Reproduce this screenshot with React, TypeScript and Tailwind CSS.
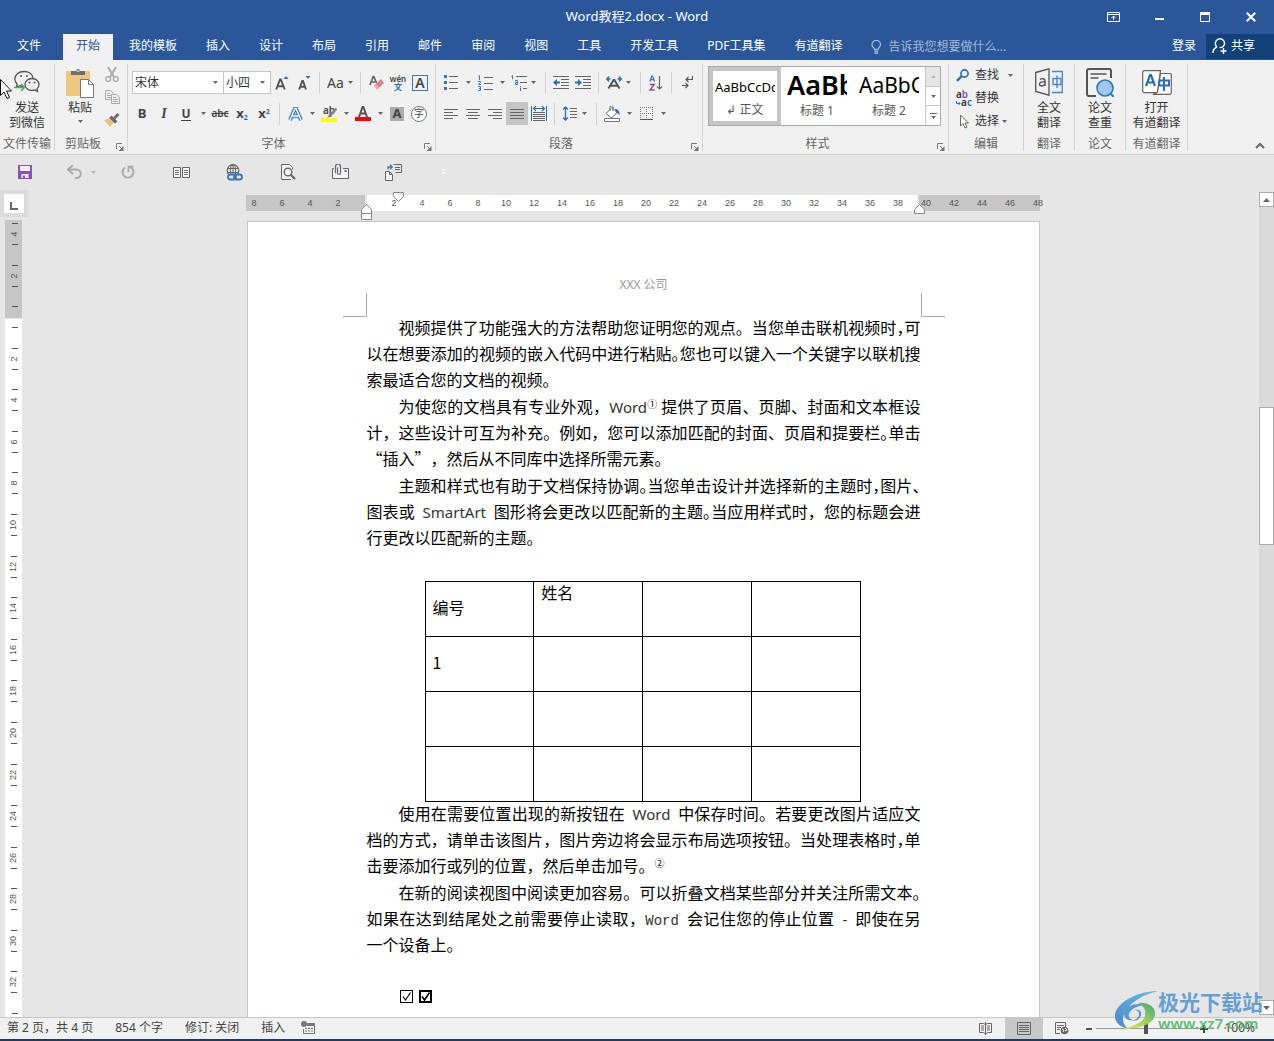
import type { ReactNode } from "react";

const UI_FONT = "font-['Noto_Sans','Noto_Sans_CJK_SC',sans-serif]";

const TABS = ["插入", "设计", "布局", "引用", "邮件", "审阅", "视图", "工具", "开发工具", "PDF工具集", "有道翻译"];

const H_MARKS = [8, 6, 4, 2, 0, 2, 4, 6, 8, 10, 12, 14, 16, 18, 20, 22, 24, 26, 28, 30, 32, 34, 36, 38, 40, 42, 44, 46, 48];
// 0 draws the ticks only
const V_MARKS = [4, 2, 0, 2, 4, 6, 8, 10, 12, 14, 16, 18, 20, 22, 24, 26, 28, 30, 32, 0];

interface IconProps {
  w: number;
  h: number;
  children: ReactNode;
  className?: string;
}

function Icon({ w, h, children, className = "" }: IconProps) {
  return (
    <svg width={w} height={h} viewBox={`0 0 ${w} ${h}`} fill="none" className={`shrink-0 ${className}`} aria-hidden="true">
      {children}
    </svg>
  );
}

function Caret() {
  return (
    <Icon w={5} h={3}>
      <path d="M0 0h5L2.500 3z" fill="#666" />
    </Icon>
  );
}

function Tool({ label, active, children }: { label: string; active?: boolean; children: ReactNode }) {
  return (
    <button aria-label={label} className={`flex h-[23px] w-[22px] shrink-0 items-center justify-center ${active ? "bg-[#c5c5c5]" : ""}`}>
      {children}
    </button>
  );
}

function Drop({ label, tight }: { label: string; tight?: boolean }) {
  return (
    <button aria-label={label} className={`flex h-[23px] shrink-0 items-center ${tight ? "w-[11px] pl-px" : "w-3 justify-center"}`}>
      <Caret />
    </button>
  );
}

function Sep() {
  return (
    <span className="flex w-[9px] shrink-0 justify-center">
      <span className="h-[22px] w-px bg-[#d4d4d4]" />
    </span>
  );
}

interface GroupProps {
  title: string;
  width: string;
  launcher?: boolean;
  children: ReactNode;
}

function Group({ title, width, launcher, children }: GroupProps) {
  return (
    <section className={`flex shrink-0 flex-col border-r border-[#d4d4d4] ${width}`}>
      <div className="h-[73px]">{children}</div>
      <div className={`relative text-center leading-[14px] whitespace-nowrap text-[#666] ${launcher ? "pr-4" : ""}`}>
        {title}
        {launcher && (
          <button aria-label={`${title}设置`} className="absolute right-[3px] bottom-0">
            <Icon w={8} h={8}>
              <path d="M.5 6V.5H6M3 3l3 3" stroke="#777" />
              <path d="M7.500 3v5h-5z" fill="#777" />
            </Icon>
          </button>
        )}
      </div>
    </section>
  );
}

function BigButton({ icon, lines }: { icon: ReactNode; lines: string[] }) {
  return (
    <button className="flex w-full flex-col items-center pt-[3px] leading-[15px] whitespace-nowrap text-[#333]">
      <span className="mb-[3px] flex h-[30px] items-center">{icon}</span>
      {lines.map((l) => (
        <span key={l}>{l}</span>
      ))}
    </button>
  );
}

/* ---------- title bar and tabs ---------- */

function TitleBar() {
  return (
    <div className="relative flex h-[34px] items-center justify-end text-white">
      <h1 className="absolute inset-x-0 text-center text-[13px]">Word教程2.docx - Word</h1>
      <div className="relative flex">
        <button aria-label="功能区显示选项" className="flex h-8 w-[46px] items-center justify-center">
          <Icon w={13} h={10}>
            <path d="M.5.5h12v9H.5zM.5 2.500h12M6.500 8V4.500M4.500 6l2-2 2 2" stroke="#fff" />
          </Icon>
        </button>
        <button aria-label="最小化" className="flex h-8 w-[46px] items-center justify-center">
          <span className="mt-1 h-0.5 w-[9px] bg-white" />
        </button>
        <button aria-label="最大化" className="flex h-8 w-[46px] items-center justify-center">
          <span className="h-[10px] w-[10px] border border-t-[3px] border-white" />
        </button>
        <button aria-label="关闭" className="flex h-8 w-[46px] items-center justify-center">
          <Icon w={10} h={10}>
            <path d="M.8.8l8.400 8.400M9.200.8L.8 9.200" stroke="#fff" strokeWidth="2" />
          </Icon>
        </button>
      </div>
    </div>
  );
}

function TabBar() {
  return (
    <nav className="flex h-[26px] items-stretch text-white">
      <div className="flex items-stretch gap-[29px] pl-[17px] whitespace-nowrap">
        <button className="mr-1.5 pb-[3px]">文件</button>
        <button className="-mx-[13px] bg-[#f1f1f1] px-[13px] pb-[3px] text-[#2b579a]">开始</button>
        <button className="pb-[3px]">我的模板</button>
        {TABS.map((t) => (
          <button key={t} className="pb-[3px]">
            {t}
          </button>
        ))}
      </div>
      <label className="ml-[29px] flex items-center gap-1.5 text-[#a3b8d8]">
        <Icon w={11} h={14}>
          <path d="M3.500 9.500C3.500 8 1 7 1 4.600a4.200 4.200 0 018.500 0C9.500 7 7 8 7 9.500zM3.500 11.500h3.600M3.500 13.300h3.600" stroke="#a3b8d8" strokeWidth="1.300" />
        </Icon>
        <input
          placeholder="告诉我您想要做什么..."
          className="w-[140px] bg-transparent outline-none placeholder:text-[#a3b8d8]"
        />
      </label>
      <button className="ml-auto pr-[10px] pb-[3px]">登录</button>
      <button className="mb-px flex w-[68px] items-center gap-1 bg-[#124078] pb-0.5 pl-1.5">
        <Icon w={15} h={16}>
          <path d="M1 15c0-4 2.500-5.500 4-6M12.500 6A4.600 4.600 0 105 9M7.500 9.600c2.600 0 5-1 5-4.600M11.500 10v6M8.500 13h6" stroke="#fff" strokeWidth="1.400" />
        </Icon>
        共享
      </button>
    </nav>
  );
}

/* ---------- ribbon ---------- */

function ClipboardGroup() {
  return (
    <Group title="剪贴板" width="w-[73px]" launcher>
      <div className="flex pl-px">
        <button className="flex w-12 flex-col items-center pt-1 leading-[15px] text-[#333]">
          <Icon w={28} h={30}>
            <path d="M0 3h24v25H0z" fill="#edc87e" />
            <path d="M5 7V3h5a2 2 0 014 0h5v4z" fill="#6e6e6e" />
            <path d="M10.500 3h3" stroke="#fff" />
            <path d="M14.500 11.500h8l5 5v13h-13z" fill="#fff" stroke="#777" />
            <path d="M22.500 11.500v5h5" stroke="#777" />
          </Icon>
          <span className="mt-0.5 mb-[5px]">粘贴</span>
          <Caret />
        </button>
        <div className="flex flex-col gap-[3px]">
          <button aria-label="剪切" className="flex h-5 w-4 items-center justify-center">
            <Icon w={14} h={15}>
              <path d="M3 0l6 10M11 0L5 10" stroke="#aaa" strokeWidth="2" />
              <circle cx="3.200" cy="12" r="2.400" stroke="#aaa" strokeWidth="1.400" />
              <circle cx="10.800" cy="12" r="2.400" stroke="#aaa" strokeWidth="1.400" />
            </Icon>
          </button>
          <button aria-label="复制" className="flex h-5 w-4 items-center justify-center">
            <Icon w={15} h={14}>
              <path d="M.5.500h5l3 3v6h-8zM2 3.500h3M2 5.500h4M2 7.500h4" stroke="#aca7ac" />
              <path d="M6.500 4.500h5l3 3v6h-8z" fill="#f1f1f1" stroke="#aca7ac" />
              <path d="M8 7.500h3M8 9.500h5M8 11.500h5" stroke="#aca7ac" />
            </Icon>
          </button>
          <button aria-label="格式刷" className="flex h-5 w-4 items-center justify-center">
            <Icon w={16} h={14}>
              <path d="M0 7l5-1.500 5 4L6 14z" fill="#edc07a" />
              <path d="M5 5l2.500-2.500 6 6L11 10.500z" fill="#6e6e6e" />
              <path d="M10 5.500L14.500 1" stroke="#6e6e6e" strokeWidth="3" />
            </Icon>
          </button>
        </div>
      </div>
    </Group>
  );
}

function FontSelect({ label, value, width }: { label: string; value: string; width: string }) {
  return (
    <label className={`relative flex h-[23px] shrink-0 items-center ${width}`}>
      <select aria-label={label} defaultValue={value} className="h-full w-full appearance-none rounded-none border border-[#c6c6c6] bg-white pl-0.5 text-[#333]">
        <option>{value}</option>
      </select>
      <span className="pointer-events-none absolute right-1.5">
        <Caret />
      </span>
    </label>
  );
}

function FontGroup() {
  return (
    <Group title="字体" width="w-[308px]" launcher>
      <div className="flex items-center pt-[7px] pl-1">
        <FontSelect label="字体" value="宋体" width="w-[92px]" />
        <FontSelect label="字号" value="小四" width="-ml-px w-12" />
        <Tool label="增大字号">
          <Icon w={14} h={14}>
            <path d="M1.200 13.500L5 3.500h.8l3.900 10M2.600 10.300h5.600" stroke="#555" strokeWidth="1.900" />
            <path d="M8.500 3L11 0l2.500 3z" fill="#3c74b4" />
          </Icon>
        </Tool>
        <Tool label="减小字号">
          <Icon w={14} h={14}>
            <path d="M2.200 13.500L5.200 5h.8l3 8.500M3.400 10.800h4.400" stroke="#555" strokeWidth="1.900" />
            <path d="M8.500 0h5L11 3z" fill="#3c74b4" />
          </Icon>
        </Tool>
        <Sep />
        <button aria-label="更改大小写" className="flex w-8 items-center justify-center gap-1 text-[14px] leading-5 text-[#444]">
          Aa <Caret />
        </button>
        <Sep />
        <Tool label="清除格式">
          <Icon w={15} h={15}>
            <path d="M1 10L4.200 1.500h.6L7.500 8M2 7h4" stroke="#666" strokeWidth="1.700" />
            <path d="M5 10.500l7-6.500 3 4-7 6.500z" fill="#e8798f" />
            <path d="M5 10.500l2-1.800 3 4-2 1.800z" fill="#f0a7b4" />
          </Icon>
        </Tool>
        <Tool label="拼音指南">
          <span className="flex flex-col items-center text-[8px] leading-[9px] text-[#444]">
            <span className="font-semibold">wén</span>
            <b className="leading-[8px] text-[#2e6cb0]">文</b>
          </span>
        </Tool>
        <Tool label="字符边框">
          <span className="flex h-4 w-4 items-center justify-center border border-[#3c74b4] text-[14px] font-semibold text-[#444]">A</span>
        </Tool>
      </div>
      <div className="flex items-center pt-2 pl-[3px] text-[13px] text-[#444]">
        <Tool label="加粗">
          <b>B</b>
        </Tool>
        <Tool label="倾斜">
          <b className="font-['Liberation_Serif',serif] text-[14px] italic">I</b>
        </Tool>
        <Tool label="下划线">
          <b className="border-b border-[#444] text-[12px] leading-[13px]">U</b>
        </Tool>
        <Drop label="下划线样式" />
        <Tool label="删除线">
          <span className="text-[10px] font-semibold line-through">abc</span>
        </Tool>
        <Tool label="下标">
          <b>
            x<sub className="text-[7px] text-[#2e6cb0]">2</sub>
          </b>
        </Tool>
        <Tool label="上标">
          <b>
            x<sup className="text-[7px] text-[#2e6cb0]">2</sup>
          </b>
        </Tool>
        <Sep />
        <Tool label="文本效果">
          <Icon w={15} h={14}>
            <path d="M2 13L7 1.500h1L13 13M4.500 9h6" stroke="#a9cbee" strokeWidth="4.600" />
            <path d="M2 13L7 1.500h1L13 13M4.500 9h6" stroke="#2e6cb0" strokeWidth="3.200" />
            <path d="M2 13L7 1.500h1L13 13M4.500 9h6" stroke="#fff" strokeWidth="1.400" />
          </Icon>
        </Tool>
        <Drop label="文本效果选项" />
        <Tool label="突出显示">
          <span className="relative flex h-4 w-4 flex-col justify-between">
            <span className="text-[10px] leading-[9px] font-semibold">ab</span>
            <span className="h-1 bg-[#ffff00]" />
            <Icon w={12} h={11} className="absolute top-0.5 left-1">
              <path d="M11.500.5L5 7.500" stroke="#888" strokeWidth="2.600" />
              <path d="M5.500 5L2 9.500l5-1z" fill="#777" />
            </Icon>
          </span>
        </Tool>
        <Drop label="突出显示颜色" />
        <Tool label="字体颜色">
          <Icon w={16} h={15}>
            <path d="M0 11h16v4H0z" fill="#f00" />
            <path d="M4 11L7.600 1h.8L12 11M5.500 7.500h5" stroke="#555" strokeWidth="2" />
          </Icon>
        </Tool>
        <Drop label="字体颜色选项" />
        <Tool label="字符底纹">
          <b className="flex h-[14px] w-[14px] items-center justify-center bg-[#ababab]">A</b>
        </Tool>
        <Tool label="带圈字符">
          <span className="flex h-4 w-4 shrink-0 items-center justify-center rounded-full border border-[#777] bg-white text-[10px]">字</span>
        </Tool>
      </div>
    </Group>
  );
}

const ALIGN_LINES = [
  { label: "左对齐", d: "M0 .5h14M0 3.500h9M0 6.500h14M0 9.500h9" },
  { label: "居中", d: "M0 .5h14M2 3.500h10M0 6.500h14M2 9.500h10" },
  { label: "右对齐", d: "M0 .5h14M5 3.500h9M0 6.500h14M5 9.500h9" },
  { label: "两端对齐", d: "M0 .5h14M0 3.500h14M0 6.500h14M0 9.500h14" },
];

function ParagraphGroup() {
  return (
    <Group title="段落" width="w-[267px]" launcher>
      <div className="flex items-center pt-[7px] pl-1">
        <Tool label="项目符号">
          <Icon w={14} h={15}>
            <path d="M5 1.500h9M5 7.500h9M5 13.500h9" stroke="#666" />
            <path d="M0 0h3v3H0zM0 6h3v3H0zM0 12h3v3H0z" fill="#3c74b4" />
          </Icon>
        </Tool>
        <Drop label="项目符号库" />
        <Tool label="编号">
          <Icon w={15} h={16}>
            <path d="M6 2.500h9M6 8.500h9M6 14.500h9" stroke="#666" />
            <path d="M.5 1.500l1-1V5M0 6.500h2.500v1L.5 9.500H3M0 11.500h2.500v4H0M1 13.500h1.500" stroke="#3c74b4" />
          </Icon>
        </Tool>
        <Drop label="编号库" />
        <Tool label="多级列表">
          <Icon w={16} h={16}>
            <path d="M5 1.500h11M9 7.500h7M12 13.500h4" stroke="#666" />
            <path d="M.5 1.500l1-1V4M4 5.500h2.500v4H4.500v-2h2M9.500 11v.8M9.500 12.500V16" stroke="#3c74b4" />
          </Icon>
        </Tool>
        <Drop label="列表库" tight />
        <Sep />
        <Tool label="减少缩进量">
          <Icon w={16} h={13}>
            <path d="M0 .5h16M8 3.500h8M8 6.500h8M8 9.500h8M0 12.500h16" stroke="#666" />
            <path d="M7 6.500H2" stroke="#2e6cb0" strokeWidth="2" />
            <path d="M4 3v7L0 6.500z" fill="#2e6cb0" />
          </Icon>
        </Tool>
        <Tool label="增加缩进量">
          <Icon w={16} h={13}>
            <path d="M0 .5h16M8 3.500h8M8 6.500h8M8 9.500h8M0 12.500h16" stroke="#666" />
            <path d="M0 6.500h5" stroke="#2e6cb0" strokeWidth="2" />
            <path d="M3 3v7l4-3.500z" fill="#2e6cb0" />
          </Icon>
        </Tool>
        <Sep />
        <Tool label="中文版式">
          <Icon w={16} h={13}>
            <path d="M2.500 12.500L7.600 4h.8l5.100 8.500M4.500 9.800h7" stroke="#555" strokeWidth="2" />
            <path d="M.5 3h4M11.500 3h4M3 .5L.8 3 3 5.500M13 .5L15.200 3 13 5.500" stroke="#2e6cb0" strokeWidth="1.400" />
          </Icon>
        </Tool>
        <Drop label="中文版式选项" tight />
        <Sep />
        <Tool label="排序">
          <Icon w={14} h={16}>
            <path d="M.8 6.500L3 .8h.4l2.200 5.700M1.500 4.600h3.500" stroke="#3c74b4" strokeWidth="1.200" />
            <path d="M.8 9.500h4.400L1 15h4.600" stroke="#8a4fae" strokeWidth="1.400" />
            <path d="M10.500 1v13M8 11.500l2.500 2.500 2.500-2.500" stroke="#666" strokeWidth="1.200" />
          </Icon>
        </Tool>
        <Sep />
        <Tool label="显示编辑标记">
          <Icon w={11} h={13}>
            <path d="M10.500 0v3.500H4M6.500 1L4 3.500 6.500 6M0 9.500h5.500M3.500 7L6 9.500 3.500 12" stroke="#555" strokeWidth="1.200" />
          </Icon>
        </Tool>
      </div>
      <div className="flex items-center pt-2 pl-1">
        {ALIGN_LINES.map((a) => (
          <Tool key={a.label} label={a.label} active={a.label === "两端对齐"}>
            <Icon w={14} h={10}>
              <path d={a.d} stroke="#666" />
            </Icon>
          </Tool>
        ))}
        <Tool label="分散对齐">
          <Icon w={16} h={15}>
            <path d="M.5 0v15M15.500 0v15" stroke="#2e6cb0" />
            <path d="M2.500 2.500h11M5 0L2.500 2.500 5 5M11 0l2.500 2.500L11 5" stroke="#2e6cb0" strokeWidth="1.200" />
            <path d="M2 6.500h12M2 8.500h12M2 10.500h12M2 12.500h12M2 14.500h12" stroke="#666" />
          </Icon>
        </Tool>
        <Sep />
        <Tool label="行距">
          <Icon w={14} h={15}>
            <path d="M2.500 1v13M0 3.500L2.500 1 5 3.500M0 11.500L2.500 14 5 11.500" stroke="#2e6cb0" strokeWidth="1.300" />
            <path d="M7 2.500h7M7 5.500h7M7 8.500h7M7 11.500h7" stroke="#666" />
          </Icon>
        </Tool>
        <Drop label="行距选项" tight />
        <Sep />
        <Tool label="底纹">
          <Icon w={17} h={16}>
            <path d="M2 7.500L8 1.500l5 5-5.500 5.500z" fill="#fff" stroke="#666" />
            <path d="M6 5V1.500A1.500 1.500 0 019 1v4" stroke="#666" />
            <path d="M11 3c3 0 5 2 4.500 7-.5-2-1.500-3-3-3z" fill="#2e6cb0" />
            <path d="M.5 12.500h15v3H.5z" fill="#fff" stroke="#777" />
          </Icon>
        </Tool>
        <Drop label="底纹颜色" />
        <Tool label="边框">
          <Icon w={13} h={13}>
            <path d="M.5 0v12M6.500 0v12M12.500 0v12M0 .5h13M0 6.500h13" stroke="#777" strokeDasharray="1 1" />
            <path d="M0 12.500h13" stroke="#555" />
          </Icon>
        </Tool>
        <Drop label="边框选项" />
      </div>
    </Group>
  );
}

function StylesGroup() {
  return (
    <Group title="样式" width="w-[246px]" launcher>
      <div className="pt-0.5 pl-[5px]">
        <div className="flex h-[60px] w-[233px] border border-[#ababab] bg-white text-[#555]">
          <button className="flex w-[72px] flex-col items-center border-4 border-[#c5c5c5]">
            <span className="flex h-8 w-[60px] items-center overflow-hidden pt-px text-[13px] whitespace-nowrap text-black">AaBbCcDc</span>
            <span className="leading-[14px]">↲ 正文</span>
          </button>
          <button className="flex w-[72px] flex-col items-center">
            <span className="flex h-[37px] w-[60px] items-center overflow-hidden text-[27px] font-semibold whitespace-nowrap text-black">AaBb</span>
            <span className="leading-[14px]">标题 1</span>
          </button>
          <button className="flex w-[72px] flex-col items-center">
            <span className="flex h-[37px] w-[60px] items-center overflow-hidden pt-px text-[21px] whitespace-nowrap text-black">AaBbC</span>
            <span className="leading-[14px]">标题 2</span>
          </button>
          <div className="flex flex-1 flex-col divide-y divide-[#c6c6c6] border-l border-[#c6c6c6]">
            <button aria-label="上一行" className="flex flex-1 items-center justify-center bg-[#e6e6e6]">
              <Icon w={5} h={3}>
                <path d="M0 3h5L2.500 0z" fill="#bbb" />
              </Icon>
            </button>
            <button aria-label="下一行" className="flex flex-1 items-center justify-center">
              <Caret />
            </button>
            <button aria-label="其他样式" className="flex flex-1 items-center justify-center">
              <Icon w={7} h={6}>
                <path d="M0 .5h7" stroke="#666" />
                <path d="M1 3h5L3.500 6z" fill="#666" />
              </Icon>
            </button>
          </div>
        </div>
      </div>
    </Group>
  );
}

function EditGroup() {
  return (
    <Group title="编辑" width="w-[75px]">
      <div className="flex flex-col gap-[3px] pt-px pl-[7px] text-[#333]">
        <button className="flex h-5 items-center gap-[3px]">
          <Icon w={16} h={13}>
            <circle cx="8.500" cy="4.500" r="3.600" stroke="#2e6cb0" strokeWidth="1.600" />
            <path d="M5.800 7L1 11.800" stroke="#2e6cb0" strokeWidth="2.400" />
          </Icon>
          查找
          <span className="ml-1.5">
            <Caret />
          </span>
        </button>
        <button className="flex h-5 items-center gap-[3px]">
          <span className="relative flex w-4 flex-col text-[10px] leading-[8px] font-semibold">
            <span className="pr-1 text-left">
              a<span className="text-[#8a4fae]">b</span>
            </span>
            <span className="text-right">
              a<span className="text-[#2e6cb0]">c</span>
            </span>
            <Icon w={5} h={5} className="absolute bottom-0 left-0">
              <path d="M.5 0v2.500H4M2.500 1L4 2.500 2.500 4" stroke="#2e6cb0" />
            </Icon>
          </span>
          替换
        </button>
        <button className="flex h-5 items-center gap-[3px]">
          <Icon w={16} h={15}>
            <path d="M4.500 1v11l2.500-2.500 2 4.500 2-1-2-4h3.500z" fill="#fff" stroke="#666" />
          </Icon>
          选择
          <Caret />
        </button>
      </div>
    </Group>
  );
}

function Ribbon() {
  return (
    <div className="flex h-[95px] shrink-0 border-b border-[#d2d2d2] bg-[#f1f1f1] pt-1 pb-[3px]">
      <Group title="文件传输" width="w-[55px]">
        <BigButton
          lines={["发送", "到微信"]}
          icon={
            <Icon w={26} h={24}>
              <path d="M9.500 16.500c-1.500 0-3-.3-4-.8L2.500 17l.6-3C1.500 12.500.8 11 .8 9 .8 5 4.500 1.500 10 1.500c5 0 8.500 2.800 9 6.500" stroke="#555" strokeWidth="1.300" />
              <path d="M18 8.500c4 0 7 2.700 7 6 0 1.800-.8 3.300-2 4.300l.5 2.600-2.500-1.500c-1 .3-2 .5-3 .5-4 0-7-2.600-7-5.900s3-6 7-6z" fill="#f1f1f1" stroke="#555" strokeWidth="1.300" />
              <circle cx="7" cy="6" r="1" fill="#555" />
              <circle cx="13" cy="6" r="1" fill="#555" />
              <circle cx="15.500" cy="12.500" r="1" fill="#555" />
              <circle cx="20.500" cy="12.500" r="1" fill="#555" />
              <path d="M0 17.500h10M7 14l3.500 3.500L7 21" stroke="#4ba866" strokeWidth="1.500" />
            </Icon>
          }
        />
      </Group>
      <ClipboardGroup />
      <FontGroup />
      <ParagraphGroup />
      <StylesGroup />
      <EditGroup />
      <Group title="翻译" width="w-[51px]">
        <BigButton
          lines={["全文", "翻译"]}
          icon={
            <Icon w={28} h={28}>
              <path d="M.7 4.500L14 .8v26.400L.7 23.500z" stroke="#555" strokeWidth="1.300" />
              <path d="M17 3.500h10.300v21H17" stroke="#4a86d8" strokeWidth="1.300" />
              <path d="M18 10.500h8v6h-8zM22 7.500V20" stroke="#4a86d8" strokeWidth="1.400" />
              <path d="M5 11.500c1.500-1.500 5-1 5 1V18M10 14c-3-.5-5.500.2-5.500 2.200 0 2.300 4 2.300 5.500 0" stroke="#555" strokeWidth="1.400" />
            </Icon>
          }
        />
      </Group>
      <Group title="论文" width="w-[51px]">
        <BigButton
          lines={["论文", "查重"]}
          icon={
            <Icon w={28} h={29}>
              <path d="M10 28H3a2 2 0 01-2-2V3a2 2 0 012-2h20a2 2 0 012 2v7" stroke="#555" strokeWidth="2" />
              <path d="M4.500 6h16M4.500 10h8" stroke="#555" strokeWidth="1.600" />
              <circle cx="19" cy="20" r="8" fill="#9dcaf5" stroke="#2e7ab5" strokeWidth="1.600" />
              <path d="M24.500 25.500L28 29" stroke="#2e7ab5" strokeWidth="2.200" />
            </Icon>
          }
        />
      </Group>
      <Group title="有道翻译" width="w-[62px]">
        <BigButton
          lines={["打开", "有道翻译"]}
          icon={
            <Icon w={30} h={25}>
              <path d="M2.500.7h16l-3 22H2.500a1.800 1.800 0 01-1.800-1.800V2.500A1.800 1.800 0 012.500.7z" fill="#fff" stroke="#666" strokeWidth="1.200" />
              <path d="M18.500 3.500h9a1.800 1.800 0 011.800 1.800v17.200a1.800 1.800 0 01-1.800 1.800H11l4.500-2z" fill="#fff" stroke="#666" strokeWidth="1.200" />
              <path d="M4 16L8 5h1l4 11M5.500 12.500h6" stroke="#2e6cb0" strokeWidth="2.200" />
              <path d="M17.500 10.500h9.500v5h-10zM22 7v14" stroke="#2e6cb0" strokeWidth="2" />
            </Icon>
          }
        />
      </Group>
      <button aria-label="折叠功能区" className="mt-auto mr-[9px] mb-0.5 ml-auto">
        <Icon w={10} h={7}>
          <path d="M1 6l4-4 4 4" stroke="#666" strokeWidth="2" />
        </Icon>
      </button>
    </div>
  );
}

/* ---------- quick access toolbar ---------- */

function QuickAccess() {
  return (
    <div className="flex h-[34px] shrink-0 items-center pl-[18px]">
      <button aria-label="保存">
        <Icon w={14} h={14}>
          <path d="M0 0h14v14H0z" fill="#8a52b3" />
          <path d="M2 1h10v5H2zM3.500 9h7v4h-7z" fill="#f6eefb" />
          <path d="M5 10.500h2V14H5z" fill="#8a52b3" />
        </Icon>
      </button>
      <button aria-label="撤消" className="ml-[35px]">
        <Icon w={16} h={14}>
          <path d="M2 4.500h7.500a4 4 0 010 8.500H8" stroke="#ababab" strokeWidth="2" />
          <path d="M6 0L1 4.500 6 9" stroke="#ababab" strokeWidth="2" />
        </Icon>
      </button>
      <button aria-label="撤消选项" className="ml-2">
        <Icon w={5} h={3}>
          <path d="M0 0h5L2.500 3z" fill="#bbb" />
        </Icon>
      </button>
      <button aria-label="重复" className="ml-[25px]">
        <Icon w={14} h={14}>
          <path d="M4 2.500A5.500 5.500 0 107 1.600M12.500 1.600H7.500V7" stroke="#ababab" strokeWidth="1.900" />
        </Icon>
      </button>
      <button aria-label="并排查看" className="ml-[38px]">
        <Icon w={17} h={11}>
          <path d="M.5.5h7v10h-7zM9.500.5h7v10h-7z" fill="#f4f4f4" stroke="#666" />
          <path d="M2 3.500h4M2 5.500h4M2 7.500h4M11 3.500h4M11 5.500h4M11 7.500h4" stroke="#777" />
        </Icon>
      </button>
      <button aria-label="插入链接" className="ml-9">
        <Icon w={17} h={17}>
          <circle cx="7" cy="6.500" r="5.800" stroke="#666" strokeWidth="1.200" />
          <ellipse cx="7" cy="6.500" rx="2.600" ry="5.800" stroke="#666" />
          <path d="M1.500 4.500h11M1.500 8.500h11M7 1v11" stroke="#666" />
          <rect x="2" y="10.500" width="8" height="5" rx="2.500" fill="#e6e6e6" stroke="#3c74b4" strokeWidth="1.800" />
          <rect x="8" y="10.500" width="8" height="5" rx="2.500" stroke="#3c74b4" strokeWidth="1.800" />
        </Icon>
      </button>
      <button aria-label="打印预览" className="ml-[38px]">
        <Icon w={15} h={16}>
          <path d="M10 15.500H.5V.5h8l3 3v2" fill="#f4f4f4" stroke="#666" />
          <circle cx="7" cy="8" r="3.800" fill="#f4f4f4" stroke="#666" strokeWidth="1.400" />
          <path d="M9.500 10.500l4.500 4.500" stroke="#666" strokeWidth="2.200" />
        </Icon>
      </button>
      <button aria-label="电子邮件" className="ml-9">
        <Icon w={17} h={16}>
          <path d="M2 4.500H.5v10h16v-10H11" fill="#f4f4f4" stroke="#666" />
          <path d="M3.500 9V2.500a2 2 0 015 0V9a1.500 1.500 0 01-3 0V3.500" stroke="#666" strokeWidth="1.200" />
          <path d="M12.500 6h2v2h-2z" fill="#3c74b4" />
        </Icon>
      </button>
      <button aria-label="粘贴文档" className="ml-9">
        <Icon w={17} h={17}>
          <path d="M.5 7.500h4l3 3v6h-7zM4.500 7.500v3h3" fill="#f4f4f4" stroke="#666" />
          <path d="M8.500.5h8v8h-6M10 3.500h5M10 5.500h5" stroke="#666" />
          <path d="M3 5.500V3h4M5 .8L7.200 3 5 5.200" stroke="#3c74b4" strokeWidth="1.300" />
        </Icon>
      </button>
      <button aria-label="自定义快速访问工具栏" className="ml-[39px]">
        <Icon w={5} h={6}>
          <path d="M0 .5h5" stroke="#f8f8f8" />
          <path d="M0 3h5L2.500 6z" fill="#f8f8f8" />
        </Icon>
      </button>
    </div>
  );
}

/* ---------- document ---------- */

function IndentMark({ className, d, h }: { className: string; d: string; h: number }) {
  return (
    <Icon w={11} h={h} className={`absolute ${className}`}>
      <path d={d} fill="#fff" stroke="#888" />
    </Icon>
  );
}

function HorizontalRuler() {
  return (
    <div className="relative mt-1.5 flex h-4 w-[794px] gap-0.5 font-['Liberation_Sans',sans-serif] text-[9px] text-[#555]">
      <div className="w-[119px] bg-[#c6c6c6]" />
      <div className="flex-1 bg-white" />
      <div className="w-[121px] bg-[#c6c6c6]" />
      <div className="absolute inset-y-0 right-0.5 left-2 flex items-center justify-between pt-px">
        {H_MARKS.map((m, i) => (
          <span key={i} className="flex w-0 justify-center">
            {m > 0 && m}
          </span>
        ))}
      </div>
      <IndentMark className="top-[9px] left-[115px]" h={16} d="M.5 15.500v-10l5-5 5 5v10zM.5 9.500h10" />
      <IndentMark className="-top-[3px] left-[147px]" h={10} d="M.5.5h10v4l-5 5-5-5z" />
      <IndentMark className="top-[9px] right-[115px]" h={10} d="M.5 9.500v-4l5-5 5 5v4z" />
    </div>
  );
}

function VerticalRuler() {
  return (
    <div className="flex w-7 shrink-0 flex-col">
      <button aria-label="制表符" className="mt-px flex h-[27px] w-7 items-center justify-center border-4 border-[#dcdcdc] bg-white">
        <Icon w={8} h={8} className="mt-1">
          <path d="M1 0v7h7" stroke="#666" strokeWidth="2" />
        </Icon>
      </button>
      <div className="relative mt-[3px] ml-[5px] flex min-h-0 w-[17px] flex-1 flex-col overflow-hidden font-['Liberation_Sans',sans-serif] text-[9px] text-[#555]">
        <div className="mb-px h-[98px] shrink-0 bg-[#c6c6c6]" />
        <div className="flex-1 bg-white" />
        <div className="absolute top-[14px] right-0 -bottom-[7px] left-[2px] flex flex-col items-center justify-between">
          {V_MARKS.map((m, i) => (
            <span key={i} className="flex h-0 flex-col items-center justify-center">
              <span className="h-px w-1.5 shrink-0 bg-[#555]" />
              <span className="flex h-5 shrink-0 -rotate-90 items-center">{m > 0 && m}</span>
              <span className="h-px w-1.5 shrink-0 bg-[#555]" />
            </span>
          ))}
        </div>
      </div>
    </div>
  );
}

interface LineProps {
  indent?: boolean;
  last?: boolean;
  children: ReactNode;
}

function Line({ indent, last, children }: LineProps) {
  return (
    <span className={`block whitespace-nowrap ${indent ? "pl-8" : ""} ${last ? "" : "[text-align-last:justify]"}`}>{children}</span>
  );
}

// half-width punctuation
function Half({ children }: { children: ReactNode }) {
  return <span className="[font-feature-settings:'halt']">{children}</span>;
}

function Latin({ children }: { children: ReactNode }) {
  return <span className="mx-1 font-['Noto_Sans',sans-serif] text-[15px] leading-none text-[#333]">{children}</span>;
}

function Mono({ children }: { children: ReactNode }) {
  return <span className="mr-1 font-['Liberation_Mono',monospace] text-[14px] leading-none text-[#333]">{children}</span>;
}

function Note({ children }: { children: ReactNode }) {
  return <sup className="text-[10px] leading-none">{children}</sup>;
}

function SymbolCheck({ label, bold }: { label: string; bold?: boolean }) {
  return (
    <label className="relative flex h-[13px] w-[13px]">
      <input type="checkbox" defaultChecked aria-label={label} className={`h-[13px] w-[13px] appearance-none border-black ${bold ? "border-2" : "border"}`} />
      <Icon w={13} h={13} className="pointer-events-none absolute inset-0">
        <path d="M3 6.500l2.500 3.500L10.500 2.500" stroke="#000" strokeWidth={bold ? 1.6 : 1.2} />
      </Icon>
    </label>
  );
}

const TABLE_ROWS = [
  ["编号", "姓名", "", ""],
  ["1", "", "", ""],
  ["", "", "", ""],
  ["", "", "", ""],
];

function Page() {
  return (
    <article className="mt-[10px] w-[793px] flex-1 border border-b-0 border-[#c6c6c6] bg-white pr-[118px] pl-[119px] font-['Noto_Sans_CJK_SC',sans-serif] text-[16px] leading-[26px] text-black [text-spacing-trim:space-all]">
      <header className="mt-[57px] text-center font-['Noto_Sans','Noto_Sans_CJK_SC',sans-serif] text-[12px] leading-[12px] text-[#999]">XXX 公司</header>
      <div className="-mx-6 mt-0.5 flex justify-between">
        <span className="h-6 w-6 border-r border-b border-[#aaa]" />
        <span className="h-6 w-6 border-b border-l border-[#aaa]" />
      </div>

      <div className="-mt-[3px] flex flex-col gap-px">
        <p>
          <Line indent>
            视频提供了功能强大的方法帮助您证明您的观点。当您单击联机视频时<Half>，</Half>可
          </Line>
          <Line>
            以在想要添加的视频的嵌入代码中进行粘贴<Half>。</Half>您也可以键入一个关键字以联机搜
          </Line>
          <Line last>索最适合您的文档的视频。</Line>
        </p>
        <p>
          <Line indent>
            为使您的文档具有专业外观，<span className="font-['Noto_Sans',sans-serif] text-[15px] leading-none text-[#333]">Word</span>
            <Note>①</Note> 提供了页眉、页脚、封面和文本框设
          </Line>
          <Line>
            计，这些设计可互为补充。例如，您可以添加匹配的封面、页眉和提要栏<Half>。</Half>单击
          </Line>
          <Line last>“插入”，然后从不同库中选择所需元素。</Line>
        </p>
        <p>
          <Line indent>
            主题和样式也有助于文档保持协调<Half>。</Half>当您单击设计并选择新的主题时<Half>，</Half>图片<Half>、</Half>
          </Line>
          <Line>
            图表或 <Latin>SmartArt</Latin> 图形将会更改以匹配新的主题<Half>。</Half>当应用样式时，您的标题会进
          </Line>
          <Line last>行更改以匹配新的主题。</Line>
        </p>
      </div>

      <table className="mt-[31px] ml-[58px] w-[436px] table-fixed border-collapse">
        <tbody>
          {TABLE_ROWS.map((row, r) => (
            <tr key={r} className="h-[55px]">
              {row.map((cell, c) => (
                <td key={c} className={`border border-black p-0 pl-[7px] leading-[21px] ${r === 0 && c === 1 ? "align-top" : "align-middle"} ${cell ? "pb-1" : ""}`}>
                  {cell}
                </td>
              ))}
            </tr>
          ))}
        </tbody>
      </table>

      <div className="-mt-0.5 flex flex-col gap-px">
        <p>
          <Line indent>
            使用在需要位置出现的新按钮在 <Latin>Word</Latin> 中保存时间。若要更改图片适应文
          </Line>
          <Line>
            档的方式，请单击该图片，图片旁边将会显示布局选项按钮。当处理表格时<Half>，</Half>单
          </Line>
          <Line last>
            击要添加行或列的位置，然后单击加号。<Note>②</Note>
          </Line>
        </p>
        <p>
          <Line indent>
            在新的阅读视图中阅读更加容易。可以折叠文档某些部分并关注所需文本<Half>。</Half>
          </Line>
          <Line>
            如果在达到结尾处之前需要停止读取，<Mono>Word</Mono> 会记住您的停止位置 <Latin>-</Latin> 即使在另
          </Line>
          <Line last>一个设备上。</Line>
        </p>
      </div>
      <div className="mt-[33px] flex gap-1.5 pl-[33px]">
        <SymbolCheck label="选项一" />
        <SymbolCheck label="选项二" bold />
      </div>
    </article>
  );
}

function ScrollButton({ label, d }: { label: string; d: string }) {
  return (
    <button aria-label={label} className="flex h-[15px] shrink-0 items-center justify-center border border-[#ababab] bg-white">
      <Icon w={7} h={4}>
        <path d={d} fill="#666" />
      </Icon>
    </button>
  );
}

function ScrollBar() {
  return (
    <div className="mt-[3px] mb-0.5 ml-px flex w-[15px] shrink-0 flex-col bg-[#dadada]">
      <ScrollButton label="向上滚动" d="M0 4h7L3.500 0z" />
      <div className="flex flex-1 flex-col pt-[200px]">
        <div className="h-[138px] border border-[#ababab] bg-white" />
      </div>
      <ScrollButton label="向下滚动" d="M0 0h7L3.500 4z" />
    </div>
  );
}

/* ---------- status bar ---------- */

function StatusBar() {
  return (
    <footer className="flex h-[22px] shrink-0 items-stretch border-t border-[#c6c6c6] bg-[#f1f1f1] pb-0.5 pl-[7px] text-[#444]">
      <div className="flex items-center gap-[22px] whitespace-nowrap">
        <span>第 2 页，共 4 页</span>
        <span>854 个字</span>
        <span>修订: 关闭</span>
        <span>插入</span>
        <Icon w={14} h={13} className="-ml-1.5">
          <path d="M4 2.500h9.500v10h-11V8" stroke="#777" />
          <path d="M6 2.500h8V5H6z" fill="#777" />
          <path d="M4 7.500h2M7 7.500h2M10 7.500h2M4 10h2M7 10h2M10 10h2" stroke="#777" />
          <circle cx="3" cy="3" r="3" fill="#777" />
        </Icon>
      </div>
      <div className="-mb-0.5 ml-auto flex items-stretch pr-[19px]">
        <button aria-label="阅读视图" className="flex w-10 items-center justify-center">
          <Icon w={13} h={13}>
            <path d="M.5 1.500h4l2 1 2-1h4v9h-4l-2 1.500-2-1.500h-4zM6.500 0v13M2 4h3M2 6h3M2 8h3M8 4h3M8 6h3M8 8h3" stroke="#666" />
          </Icon>
        </button>
        <button aria-label="页面视图" className="flex w-[38px] items-center justify-center bg-[#c8c8c8]">
          <Icon w={14} h={13}>
            <path d="M.5.5h13v12H.5zM2 3.500h10M2 5.500h10M2 7.500h10M2 9.500h10" stroke="#666" />
          </Icon>
        </button>
        <button aria-label="Web 版式视图" className="flex w-[38px] items-center justify-center">
          <Icon w={14} h={13}>
            <path d="M5 11.500H.5V.5h10V5M2 3.500h7M2 5.500h4M2 7.500h3" stroke="#666" />
            <circle cx="9.500" cy="8.500" r="3.800" fill="#666" />
            <path d="M7 7l2 1-1 2M10 6l2 2-2 1" stroke="#f1f1f1" />
          </Icon>
        </button>
        <button aria-label="缩小" className="flex w-[15px] items-center justify-center">
          <span className="h-0.5 w-1.5 bg-[#555]" />
        </button>
        <input
          type="range"
          aria-label="显示比例"
          defaultValue={48}
          className="my-auto h-3 w-[104px] appearance-none bg-[linear-gradient(#999,#999)] bg-[length:100%_1px] bg-center bg-no-repeat [&::-webkit-slider-thumb]:h-[11px] [&::-webkit-slider-thumb]:w-1 [&::-webkit-slider-thumb]:appearance-none [&::-webkit-slider-thumb]:bg-[#555]"
        />
        <button aria-label="放大" className="flex w-2 items-center justify-center">
          <Icon w={8} h={8}>
            <path d="M4 0v8M0 4h8" stroke="#444" strokeWidth="2" />
          </Icon>
        </button>
        <button className="ml-4 pb-0.5">100%</button>
      </div>
    </footer>
  );
}

function SiteBadge() {
  return (
    <div className="pointer-events-none absolute right-[11px] bottom-[9px] flex items-end font-bold whitespace-nowrap opacity-90">
      <svg width="43" height="42" viewBox="0 0 43 42" fill="none" aria-hidden="true">
        <defs>
          <linearGradient id="sky" x1="0" y1="1" x2="1" y2="0">
            <stop offset="0" stopColor="#3c7fc8" />
            <stop offset="1" stopColor="#55bdea" />
          </linearGradient>
          <linearGradient id="leaf" x1="0" y1="1" x2="1" y2="0">
            <stop offset="0" stopColor="#f2e65a" />
            <stop offset=".5" stopColor="#9fd04c" />
            <stop offset="1" stopColor="#2f9f74" />
          </linearGradient>
        </defs>
        <path d="M43 1C24 1 3 11 0 24c-1 8 5 13 12 14-6-6-5-14 1-20C20 9 31 4 43 1z" fill="url(#sky)" />
        <path d="M23 13c10-1 18 4 17 12-2 10-15 13-36 15 12-3 24-7 26-14 1-6-1-10-7-13z" fill="url(#leaf)" />
        <path d="M29 15c-9-3-20 2-20 9 0 5 4 7 9 6-3-1-5-3-4-6 1-5 8-8 15-9z" fill="#4b93cf" />
        <path d="M15 30c5 1 9-2 9-6 0-3-2-4-5-4 5-1 8 1 7 5-1 5-6 7-11 5z" fill="#4b93cf" />
      </svg>
      <div className="flex flex-col items-start">
        <span className="text-[21px] leading-[24px] text-[#5b98d1]">极光下载站</span>
        <span className="font-['Noto_Sans',sans-serif] text-[15px] leading-[18px] font-semibold text-[#52b866]">www.xz7.com</span>
      </div>
    </div>
  );
}

export default function App() {
  return (
    <div className={`relative flex h-screen flex-col overflow-hidden bg-[#e6e6e6] text-[12px] ${UI_FONT}`}>
      <div className="shrink-0 bg-[#2b579a]">
        <TitleBar />
        <TabBar />
      </div>
      <Ribbon />
      <QuickAccess />
      <main className="flex min-h-0 flex-1">
        <VerticalRuler />
        <div className="flex min-w-0 flex-1 flex-col items-center overflow-hidden">
          <HorizontalRuler />
          <Page />
        </div>
        <ScrollBar />
      </main>
      <StatusBar />
      <div className="h-0.5 shrink-0 bg-[#1f3a5c]" />
      <SiteBadge />
      <Icon w={12} h={20} className="absolute top-[79px] left-0">
        <path d="M.5.5v16l3.500-3.500 3 6.500 2.500-1-3-6.500h5z" fill="#fff" stroke="#111" />
      </Icon>
    </div>
  );
}
